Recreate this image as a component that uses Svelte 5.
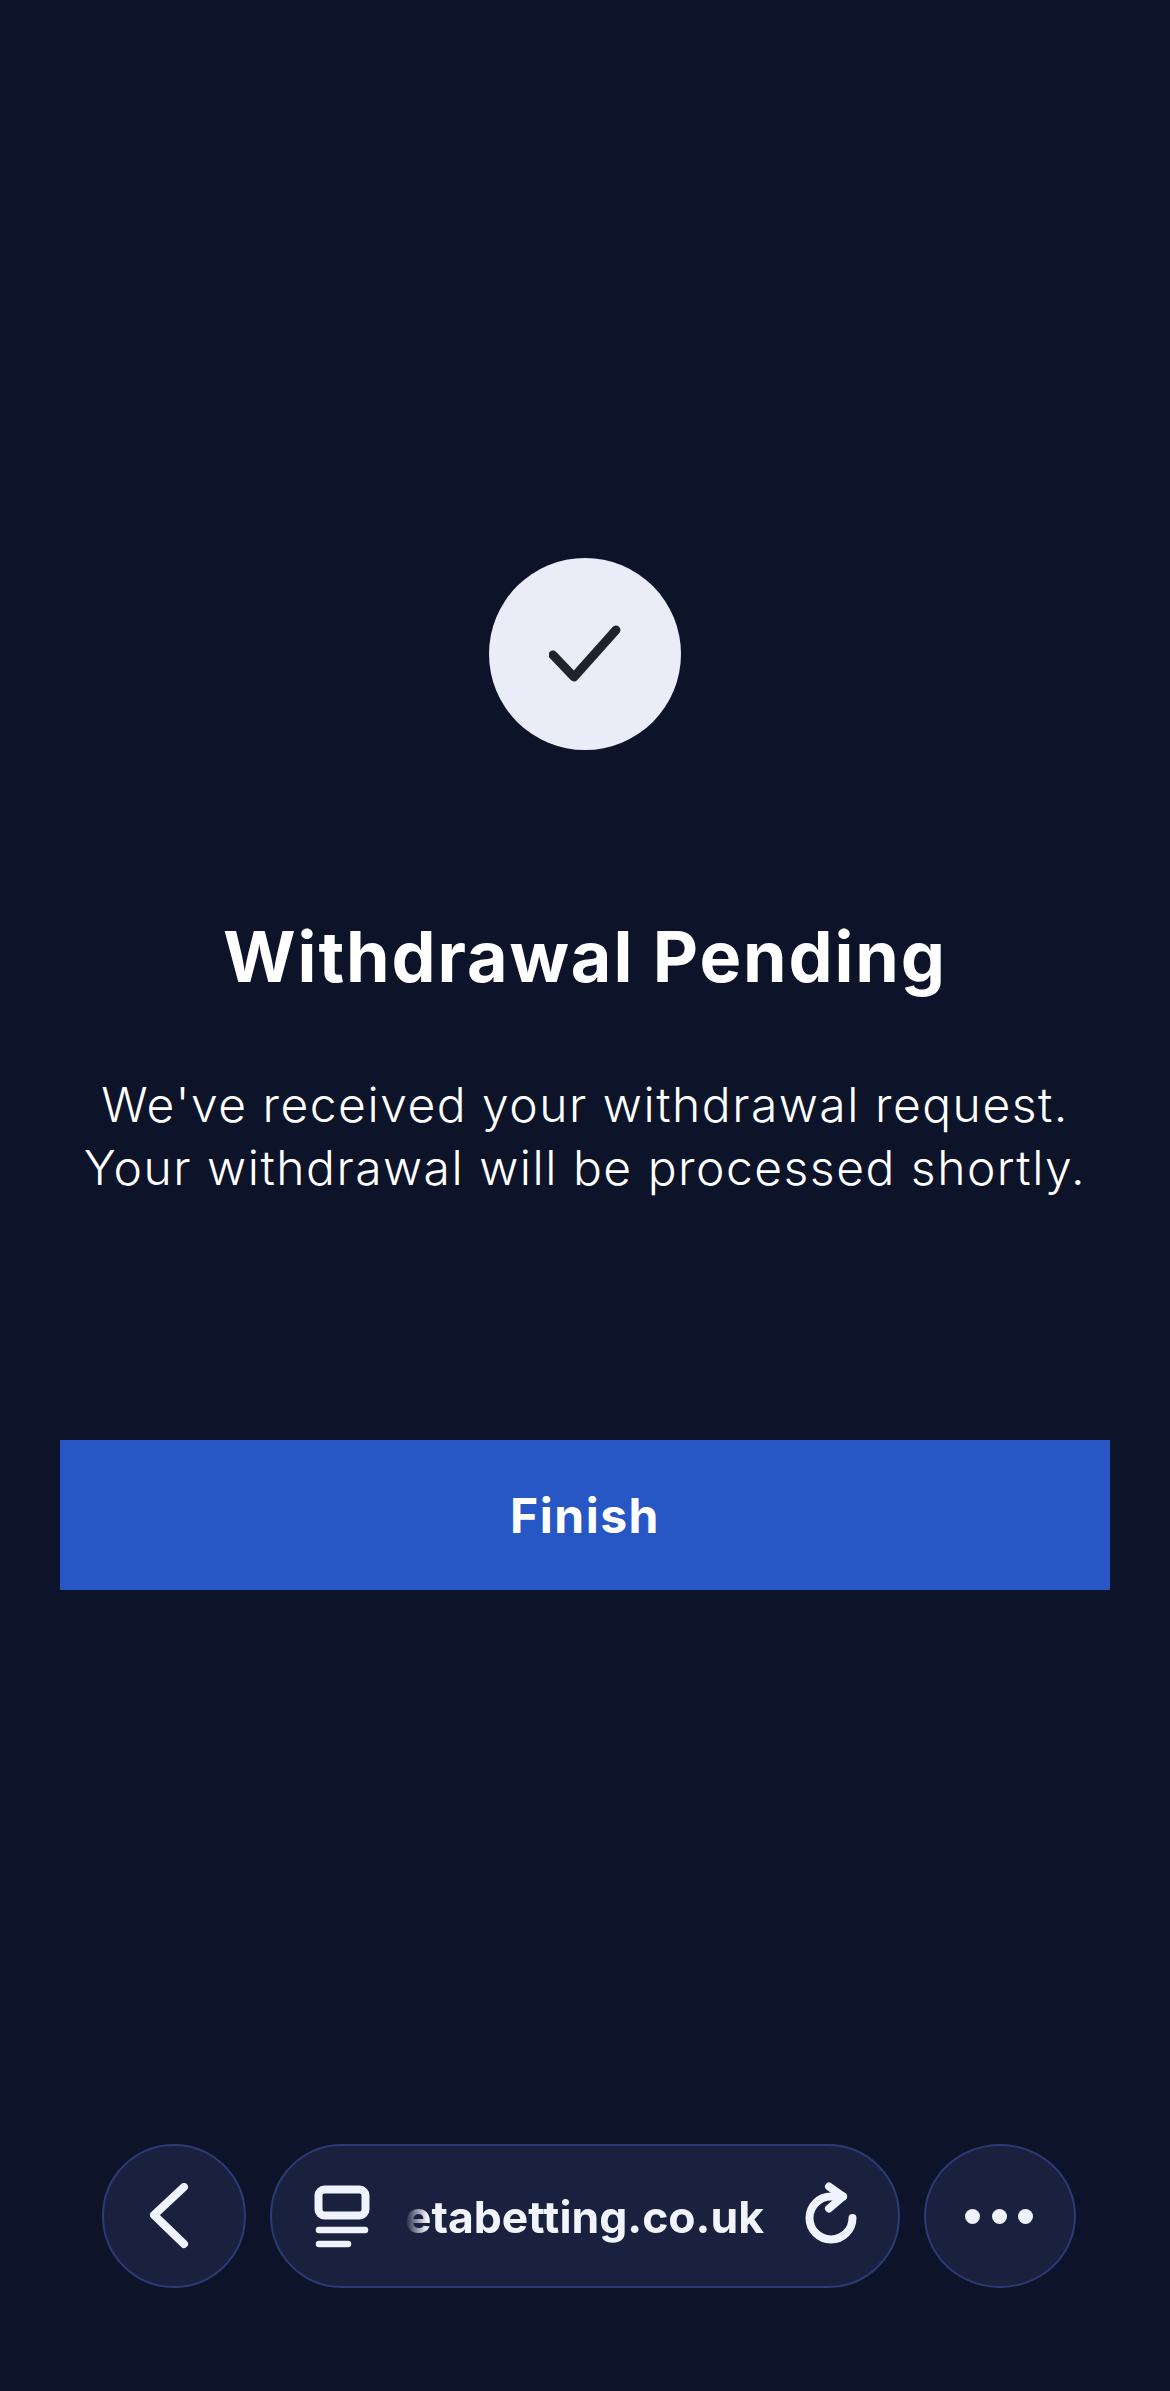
<script>
  const title = 'Withdrawal Pending';
  const lines = ["We've received your withdrawal request.", 'Your withdrawal will be processed shortly.'];
</script>

<div class="page">
  <main class="content">
    <div class="status-circle">
      <svg viewBox="0 0 72 60" width="72" height="60" aria-hidden="true">
        <path d="M4 31 L 25 53 L 67 6" />
      </svg>
    </div>

    <h1>{title}</h1>

    <p class="message">
      {#each lines as line}
        <span>{line}</span>
      {/each}
    </p>

    <button class="finish">Finish</button>
  </main>

  <nav class="browser-bar">
    <button class="round back" aria-label="Back">
      <svg viewBox="0 0 40 66" width="40" height="66">
        <path d="M34 4 L 4 32 L 34 61" />
      </svg>
    </button>

    <div class="address">
      <svg class="tabs" viewBox="0 0 56 60" width="56" height="60">
        <rect x="3.500" y="3.500" width="47" height="26" rx="6" />
        <path class="thin" d="M4 44 H 50 M4 58 H 33" />
      </svg>
      <span class="url-wrap"><span class="url">etabetting.co.uk</span></span>
      <svg class="reload" viewBox="0 0 60 68" width="60" height="68">
        <path d="M51.500 36 A 21.500 21.500 0 1 1 30 14.500 L 42 14.500" />
        <path d="M28 4.500 L 42 14.500 L 28 26.500" />
      </svg>
    </div>

    <button class="round more" aria-label="More">
      <span></span><span></span><span></span>
    </button>
  </nav>
</div>

<style>
  :global(body) {
    margin: 0;
    background: #0d1429;
  }

  .page {
    height: 2391px;
    display: flex;
    flex-direction: column;
    background: #0d1429;
    overflow: hidden;
  }

  .content {
    flex: 1;
    display: flex;
    flex-direction: column;
    align-items: center;
    padding: 558px 60px 0;
  }

  .status-circle {
    width: 192px;
    height: 192px;
    border-radius: 50%;
    background: #eaedf7;
    display: flex;
    align-items: center;
    justify-content: center;
  }

  .status-circle svg path {
    fill: none;
    stroke: #1f232e;
    stroke-width: 9;
    stroke-linecap: round;
    stroke-linejoin: round;
  }

  h1 {
    margin: 167px 0 0;
    font-family: Inter, sans-serif;
    font-size: 70px;
    line-height: 80px;
    font-weight: 700;
    letter-spacing: 1.900px;
    color: #fff;
  }

  .message {
    margin: 76px 0 0;
    display: flex;
    flex-direction: column;
    align-items: center;
    font-family: Inter, sans-serif;
    font-size: 48px;
    line-height: 63px;
    font-weight: 300;
    letter-spacing: 1.500px;
    color: #fff;
    white-space: nowrap;
  }

  .finish {
    margin-top: 241px;
    width: 100%;
    height: 150px;
    border: none;
    background: #2756c5;
    color: #fff;
    font-family: Inter, sans-serif;
    font-size: 48px;
    font-weight: 700;
    letter-spacing: 1.500px;
  }

  .browser-bar {
    display: flex;
    align-items: center;
    gap: 24px;
    padding: 0 94px 103px 102px;
  }

  .round,
  .address {
    box-sizing: border-box;
    height: 144px;
    background: #19213f;
    border: 2.500px solid #2c3a75;
    padding: 0;
  }

  .round {
    border-radius: 50%;
    display: flex;
    align-items: center;
    justify-content: center;
  }

  .back {
    width: 144px;
    padding-right: 8px;
  }

  .more {
    width: 152px;
    gap: 11.500px;
    padding-right: 2px;
  }

  .more span {
    width: 15px;
    height: 15px;
    border-radius: 50%;
    background: #eef3fd;
  }

  .address {
    flex: 1;
    border-radius: 72px;
    display: flex;
    align-items: center;
    padding: 0 37px 0 43px;
  }

  svg path,
  svg rect {
    fill: none;
    stroke: #eef3fd;
    stroke-width: 8;
    stroke-linecap: round;
    stroke-linejoin: round;
  }

  svg path.thin {
    stroke-width: 6.500;
  }

  .tabs {
    overflow: visible;
    flex: none;
  }

  .reload {
    flex: none;
  }

  .url-wrap {
    flex: 1;
    text-align: right;
    padding-right: 37px;
    padding-top: 2px;
  }

  .url {
    display: inline-block;
    font-family: Inter, sans-serif;
    font-size: 44.500px;
    font-weight: 700;
    color: #f2f4fb;
    -webkit-mask-image: linear-gradient(90deg, transparent 0, #000 22px);
    mask-image: linear-gradient(90deg, transparent 0, #000 22px);
  }
</style>
